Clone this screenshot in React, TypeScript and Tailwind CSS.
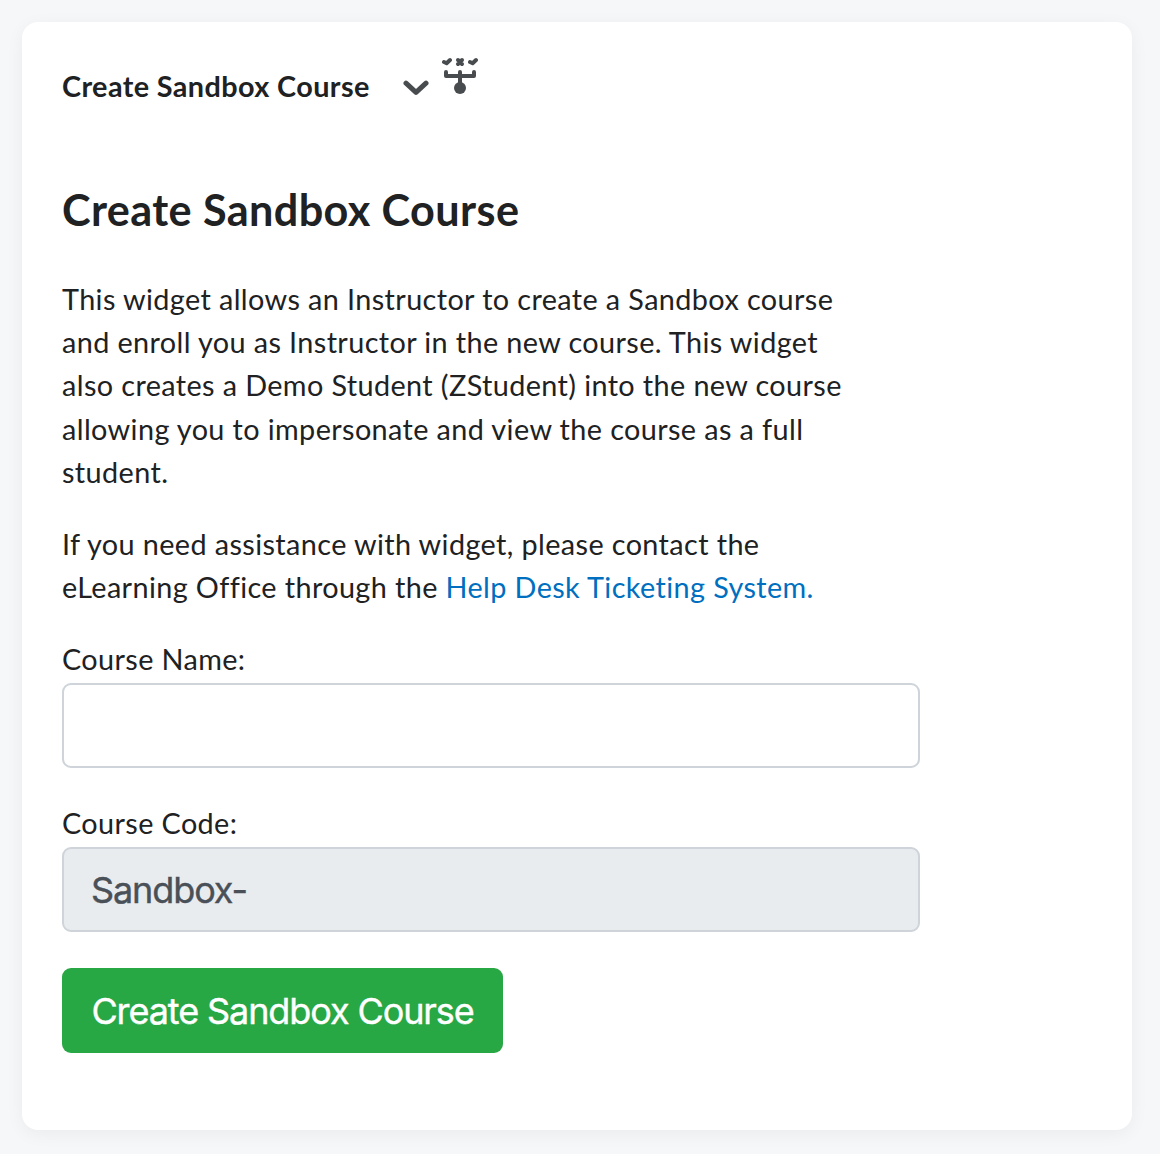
export default function App() {
  return (
    <div className="h-[1154px] w-[1160px] overflow-hidden bg-[#f6f7f9] pt-[22px] pl-[22px] font-['Lato',sans-serif] tracking-[0.395px] text-[#202122]">
      <main className="h-[1108px] w-[1110px] rounded-[16px] bg-white px-[40px] pt-[34px] shadow-[0_4px_18px_rgba(0,0,0,0.05)]">
        <header className="flex h-[62px] items-start">
          <h2 className="w-[307px] pt-[12px] text-[28.8px] leading-[36px] font-bold whitespace-nowrap">Create Sandbox Course</h2>
          <svg className="mt-[24px] ml-[34px]" width="26" height="16" viewBox="0 0 26 16" fill="none" stroke="#494c4e" strokeWidth="5" strokeLinecap="round" strokeLinejoin="round"><path d="M3 3.2l10 9.2L23 3.2" /></svg>
          <svg className="ml-[13px]" width="36" height="40" viewBox="0 0 36 40" fill="none" stroke="#494c4e" strokeWidth="4" strokeLinecap="round" strokeLinejoin="round">
            <path d="M2 6l2.6 1.2L8 4M28 6l2.6 1.2L34 4" />
            <path d="M16 4l4 4M20 4l-4 4" />
            <path d="M4 16v4h28v-4M18 16v16" />
            <circle cx="18" cy="32" r="6" fill="#494c4e" stroke="none" />
          </svg>
        </header>
        <h1 className="mt-[64px] text-[43.2px] leading-[54px] font-bold whitespace-nowrap">Create Sandbox Course</h1>
        <p className="mt-[42px] text-[28.8px] leading-[43.2px] whitespace-nowrap">This widget allows an Instructor to create a Sandbox course<br />and enroll you as Instructor in the new course. This widget<br />also creates a Demo Student (ZStudent) into the new course<br />allowing you to impersonate and view the course as a full<br />student.</p>
        <p className="mt-[29px] text-[28.8px] leading-[43.2px] whitespace-nowrap">If you need assistance with widget, please contact the<br />eLearning Office through the <a className="text-[#006fbf]">Help Desk Ticketing System.</a></p>
        <form className="flex flex-col items-start" onSubmit={(e) => e.preventDefault()}>
          <label htmlFor="name" className="mt-[28.6px] h-[45px] text-[28.8px] leading-[43.2px]">Course Name:</label>
          <input id="name" className="h-[85px] w-[858px] rounded-[9px] border-2 border-[#ced4da] bg-white px-[28px] font-['Inter',sans-serif] text-[36px] outline-none" />
          <label htmlFor="code" className="mt-[34px] h-[45px] text-[28.8px] leading-[43.2px]">Course Code:</label>
          <input id="code" readOnly value="Sandbox-" className="h-[85px] w-[858px] rounded-[9px] border-2 border-[#ced4da] bg-[#e9ecef] px-[27px] font-['Inter',sans-serif] text-[36px] tracking-[-1.1px] text-[#495057] outline-none [-webkit-text-stroke:0.4px_#495057]" />
          <button className="mt-[36px] h-[85px] w-[441px] rounded-[9px] bg-[#28a745] font-['Inter',sans-serif] text-[36px] tracking-[-1.1px] whitespace-nowrap text-white [-webkit-text-stroke:0.4px_white]">Create Sandbox Course</button>
        </form>
      </main>
    </div>
  );
}
